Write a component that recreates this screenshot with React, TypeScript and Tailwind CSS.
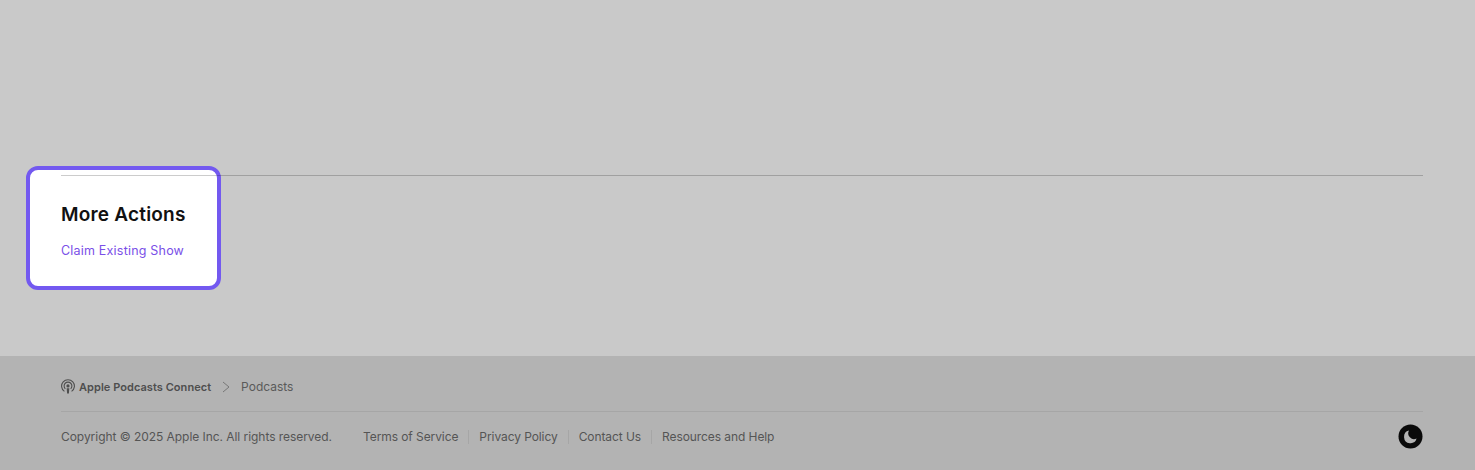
import React from "react";

const links = ["Terms of Service", "Privacy Policy", "Contact Us", "Resources and Help"];

const PodcastIcon = () => (
  <svg width="14" height="15" viewBox="0 0 14 15" fill="none" stroke="#4e4e4e" strokeWidth="1.1">
    <path d="M3.4 12.4a6.4 6.4 0 1 1 7.2 0" />
    <path d="M4.3 9.8a3.9 3.9 0 1 1 5.4 0" />
    <circle cx="7" cy="6.9" r="1.6" fill="#4e4e4e" stroke="none" />
    <path d="M5.7 9.3h2.6l-.4 5.2h-1.8z" fill="#4e4e4e" stroke="none" />
  </svg>
);

const MoonIcon = () => (
  <svg width="25" height="25" viewBox="0 0 25 25">
    <circle cx="12.5" cy="12.5" r="12" fill="#0a0a0a" />
    <path d="M11 6.6a6.4 6.4 0 1 0 7.6 8 5.8 5.8 0 0 1-7.6-8z" fill="#b3b3b3" />
  </svg>
);

export default function App() {
  return (
    <div className="h-[470px] flex flex-col bg-[#c9c9c9] overflow-hidden font-['Inter',sans-serif]">
      <main className="h-[356px] shrink-0 pl-[61px] pr-[52px] pt-[175px]">
        <div className="relative">
          <div className="absolute left-[-35px] top-[-9px] w-[195px] h-[124px] bg-white border-4 border-[#7359f0] rounded-[12px]" />
          <div className="relative h-px bg-black/20" />
          <div className="relative pt-[27px]">
            <h2 className="text-[19px] leading-[24px] font-semibold tracking-[0.2px] text-[#111111]">More Actions</h2>
            <a className="block mt-[15px] text-[12.5px] leading-[18px] tracking-[0.2px] text-[#7a4fe8]">Claim Existing Show</a>
          </div>
        </div>
      </main>

      <footer className="flex-1 bg-[#b3b3b3] pl-[61px] pr-[52px] text-[#555555]">
        <div className="h-[56px] pt-[6px] flex items-center border-b border-[#a6a6a6]">
          <div className="flex items-center gap-[4px]">
            <PodcastIcon />
            <span className="text-[11px] leading-[14px] pt-[1px] font-semibold text-[#4e4e4e] tracking-[0.05px]">Apple Podcasts Connect</span>
          </div>
          <svg width="8" height="12" viewBox="0 0 8 12" fill="none" stroke="#777777" className="ml-[11px]">
            <path d="M1 1l6 5-6 5" />
          </svg>
          <span className="ml-[11px] text-[12px] text-[#5a5a5a]">Podcasts</span>
        </div>
        <div className="h-[50px] flex items-center text-[12px] tracking-[-0.05px]">
          <span>Copyright © 2025 Apple Inc. All rights reserved.</span>
          <nav className="flex items-center ml-[21px] tracking-[-0.08px]">
            {links.map((l, i) => (
              <a key={l} className={i === 0 ? "px-[10px] leading-[14px]" : "px-[10px] leading-[14px] border-l border-[#a6a6a6]"}>{l}</a>
            ))}
          </nav>
          <div className="ml-auto mb-[2px]">
            <MoonIcon />
          </div>
        </div>
      </footer>
    </div>
  );
}
